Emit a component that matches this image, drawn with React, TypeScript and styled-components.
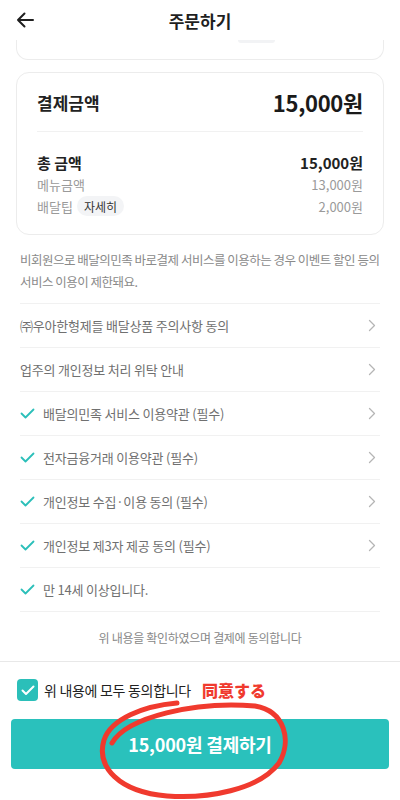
import styled, { createGlobalStyle } from "styled-components";

const GlobalStyle = createGlobalStyle`
  * { box-sizing: border-box; }
  body {
    margin: 0;
    background: #fff;
    font-family: "Noto Sans CJK KR", "Noto Sans", sans-serif;
    color: #222;
  }
`;

const TEAL = "#2bbfb9";

const Page = styled.div`
  position: relative;
  width: 400px;
  height: 800px;
  overflow: hidden;
  display: flex;
  flex-direction: column;
  background: #fff;
`;

const Header = styled.header`
  height: 40px;
  flex-shrink: 0;
  display: grid;
  grid-template-columns: 56px 1fr 56px;
  align-items: center;
  background: #fff;
`;

const BackButton = styled.button`
  border: none;
  background: none;
  padding: 0 0 0 16px;
  display: flex;
  align-items: center;
  cursor: pointer;
`;

const Title = styled.h1`
  margin: 0;
  text-align: center;
  font-size: 17px;
  font-weight: 700;
  color: #1f1f1f;
`;

const Scroll = styled.main`
  flex: 1;
  overflow: hidden;
  padding: 0 16px;
`;

const CardTail = styled.div`
  height: 20px;
  border: 1px solid #ececec;
  border-top: none;
  border-radius: 0 0 12px 12px;
`;

const ChipTail = styled.div`
  width: 37px;
  height: 3px;
  margin-left: 221px;
  background: #f2f3f5;
  border-radius: 0 0 8px 8px;
`;

const Card = styled.section`
  margin-top: 12px;
  border: 1px solid #ececec;
  border-radius: 13px;
  padding: 0 20px;
`;

const SummaryHead = styled.div`
  height: 59px;
  display: flex;
  align-items: center;
  justify-content: space-between;
  border-bottom: 1px solid #f1f1f1;
`;

const HeadLabel = styled.span`
  font-size: 17px;
  font-weight: 700;
  color: #222;
`;

const HeadAmount = styled.span`
  font-size: 22px;
  font-weight: 700;
  color: #1a1a1a;
  letter-spacing: -0.3px;
`;

const Details = styled.div`
  padding: 19px 0 17px;
`;

const DetailRow = styled.div<{ $strong?: boolean }>`
  height: 22px;
  display: flex;
  align-items: center;
  justify-content: space-between;
  font-size: ${(p) => (p.$strong ? "15px" : "13px")};
  font-weight: ${(p) => (p.$strong ? 700 : 400)};
  color: ${(p) => (p.$strong ? "#222" : "#9a9a9a")};
`;

const LabelGroup = styled.span`
  display: flex;
  align-items: center;
  gap: 4px;
`;

const Pill = styled.span`
  display: inline-flex;
  align-items: center;
  height: 20px;
  padding: 0 7px;
  border-radius: 10px;
  background: #f3f4f6;
  color: #333;
  font-size: 12px;
`;

const Terms = styled.section`
  margin: 0 4px;
`;

const Notice = styled.p`
  margin: 0;
  padding: 14px 0 10px;
  font-size: 12.5px;
  line-height: 22px;
  letter-spacing: -0.5px;
  color: #8a8a8a;
  border-bottom: 1px solid #f1f1f1;
`;

const TermRow = styled.div`
  height: 44px;
  display: flex;
  align-items: center;
  gap: 8px;
  border-bottom: 1px solid #f1f1f1;
  font-size: 13px;
  color: #707070;
  letter-spacing: -0.2px;
  padding-right: 4px;
`;

const TermText = styled.span`
  flex: 1;
`;

const ConfirmNote = styled.p`
  margin: 0;
  padding-top: 16px;
  text-align: center;
  font-size: 12px;
  line-height: 20px;
  color: #888;
  letter-spacing: -0.3px;
`;

const Footer = styled.footer`
  flex-shrink: 0;
  height: 139px;
  border-top: 1px solid #e8e8e8;
  padding: 17px 11px 0;
  display: flex;
  flex-direction: column;
  gap: 18px;
`;

const AgreeRow = styled.label`
  display: flex;
  align-items: center;
  gap: 6px;
  height: 22px;
  padding-left: 6px;
`;

const CheckBox = styled.span`
  width: 21px;
  height: 22px;
  border-radius: 4px;
  background: ${TEAL};
  display: flex;
  align-items: center;
  justify-content: center;
`;

const AgreeText = styled.span`
  font-size: 14px;
  color: #222;
  letter-spacing: -0.3px;
`;

const Annotation = styled.span`
  margin-left: 5px;
  font-family: "Noto Sans CJK JP", sans-serif;
  font-size: 16px;
  font-weight: 900;
  color: #f03a2e;
`;

const PayButton = styled.button`
  height: 50px;
  border: none;
  border-radius: 4px;
  background: #2ac1bc;
  color: #fff;
  font-family: "Noto Sans CJK KR", sans-serif;
  font-size: 18px;
  font-weight: 700;
  letter-spacing: -0.2px;
  cursor: pointer;
`;

// hand-drawn marker circle laid over the pay button
const Circle = styled.svg`
  position: absolute;
  left: 95px;
  top: 693px;
  overflow: visible;
  pointer-events: none;
`;

const Tick = () => (
  <svg width="15" height="11" viewBox="0 0 15 11">
    <polyline points="1.5,5.5 5.5,9.5 13.5,1.5" fill="none" stroke={TEAL} strokeWidth="1.8" strokeLinecap="round" strokeLinejoin="round" />
  </svg>
);

const Chevron = () => (
  <svg width="8" height="13" viewBox="0 0 8 13">
    <polyline points="1.5,1.5 6.5,6.5 1.5,11.5" fill="none" stroke="#b5b5b5" strokeWidth="1.3" strokeLinecap="round" strokeLinejoin="round" />
  </svg>
);

const terms = [
  { text: "㈜우아한형제들 배달상품 주의사항 동의", checked: false, link: true },
  { text: "업주의 개인정보 처리 위탁 안내", checked: false, link: true },
  { text: "배달의민족 서비스 이용약관 (필수)", checked: true, link: true },
  { text: "전자금융거래 이용약관 (필수)", checked: true, link: true },
  { text: "개인정보 수집·이용 동의 (필수)", checked: true, link: true },
  { text: "개인정보 제3자 제공 동의 (필수)", checked: true, link: true },
  { text: "만 14세 이상입니다.", checked: true, link: false },
];

export default function App() {
  return (
    <>
      <GlobalStyle />
      <Page>
        <Header>
          <BackButton aria-label="뒤로">
            <svg width="18" height="16" viewBox="0 0 18 16">
              <path d="M17 8H2 M8.5 1.5 2 8l6.5 6.5" fill="none" stroke="#1f1f1f" strokeWidth="2" strokeLinecap="round" strokeLinejoin="round" />
            </svg>
          </BackButton>
          <Title>주문하기</Title>
          <span />
        </Header>

        <Scroll>
          <CardTail>
            <ChipTail />
          </CardTail>

          <Card>
            <SummaryHead>
              <HeadLabel>결제금액</HeadLabel>
              <HeadAmount>15,000원</HeadAmount>
            </SummaryHead>
            <Details>
              <DetailRow $strong>
                <span>총 금액</span>
                <span>15,000원</span>
              </DetailRow>
              <DetailRow>
                <span>메뉴금액</span>
                <span>13,000원</span>
              </DetailRow>
              <DetailRow>
                <LabelGroup>
                  배달팁 <Pill>자세히</Pill>
                </LabelGroup>
                <span>2,000원</span>
              </DetailRow>
            </Details>
          </Card>

          <Terms>
            <Notice>
              비회원으로 배달의민족 바로결제 서비스를 이용하는 경우 이벤트 할인 등의 서비스 이용이 제한돼요.
            </Notice>
            {terms.map((t) => (
              <TermRow key={t.text}>
                {t.checked && <Tick />}
                <TermText>{t.text}</TermText>
                {t.link && <Chevron />}
              </TermRow>
            ))}
            <ConfirmNote>위 내용을 확인하였으며 결제에 동의합니다</ConfirmNote>
          </Terms>
        </Scroll>

        <Footer>
          <AgreeRow>
            <CheckBox>
              <svg width="14" height="11" viewBox="0 0 14 11">
                <polyline points="1.5,5.5 5,9 12.5,1.5" fill="none" stroke="#fff" strokeWidth="2" strokeLinecap="round" strokeLinejoin="round" />
              </svg>
            </CheckBox>
            <AgreeText>위 내용에 모두 동의합니다</AgreeText>
            <Annotation>同意する</Annotation>
          </AgreeRow>
          <PayButton>15,000원 결제하기</PayButton>
        </Footer>

        <Circle width="200" height="107" viewBox="0 0 200 107">
          <path
            d="M17 50 C32 24, 100 8, 160 13 C190 18, 197 48, 184 70 C164 97, 112 106, 72 103 C24 99, 1 74, 9 47 C16 26, 48 13, 82 10"
            fill="none"
            stroke="#f03a2e"
            strokeWidth="5"
            strokeLinecap="round"
            strokeLinejoin="round"
          />
        </Circle>
      </Page>
    </>
  );
}
